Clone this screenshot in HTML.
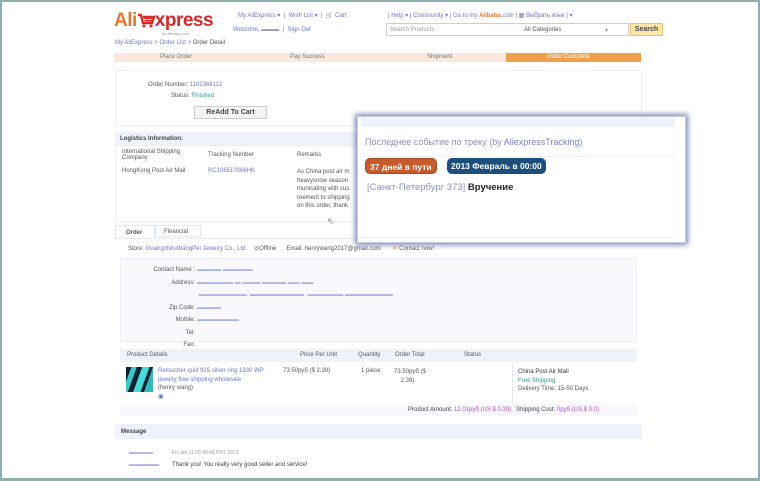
<!DOCTYPE html>
<html><head><meta charset="utf-8"><style>
*{margin:0;padding:0;box-sizing:border-box}
body{width:760px;height:481px;overflow:hidden;background:#fff;font-family:"Liberation Sans",sans-serif;font-size:6px;color:#555;position:relative}
.frame{position:absolute;left:0;top:0;width:760px;height:481px;border:2px solid #8fb0b0;border-bottom-width:3px;pointer-events:none;z-index:20}
.a{position:absolute;white-space:nowrap}
.lk{color:#6b78c8}
.bx{position:absolute;border:1px solid #eceef5}
.hd{position:absolute;background:#eef3fb}
</style></head><body>
<div class="frame"></div>
<div class="a" style="left:114px;top:11px;font-size:19px;font-weight:bold;color:#e8762c;letter-spacing:-0.5px;line-height:20px">Ali<svg width="18" height="16" viewBox="0 0 18 16" style="vertical-align:-2px"><path d="M1 3h3l2 8h9l2-6H6" fill="none" stroke="#d8282a" stroke-width="2.4"/><path d="M7 6h8M7.5 8.5h7" stroke="#d8282a" stroke-width="1.8"/><circle cx="7" cy="14" r="1.5" fill="#d8282a"/><circle cx="14" cy="14" r="1.5" fill="#d8282a"/></svg><span style="color:#d8282a">xpress</span></div>
<div class="a" style="left:162px;top:31px;font-size:4px;color:#999">by Alibaba.com</div>
<div class="a lk" style="left:238px;top:12px">My AliExpress ▾ &nbsp;|&nbsp; Wish List ▾ &nbsp;|&nbsp; <span style="color:#d63">🛒</span> Cart</div>
<div class="a lk" style="left:233px;top:27px">Welcome, <span style="color:#99a">▬▬▬</span> &nbsp;|&nbsp; Sign Out</div>
<div class="a lk" style="left:388px;top:12px">| Help ▾ | Community ▾ | Go to my <b style="color:#e8762c">Alibaba</b>.com | ▦ Выбрать язык | ▾</div>
<div class="a" style="left:386px;top:23px;width:243px;height:13px;border:1px solid #ccd;font-size:6px;color:#99a;padding:3px 3px">Search Products<span style="position:absolute;left:137px;color:#555">All Categories</span><span style="position:absolute;left:218px">▾</span></div>
<div class="a" style="left:630px;top:23px;width:33px;height:13px;background:#fbe6a8;border:1px solid #e6c46a;font-weight:bold;color:#444;font-size:7px;text-align:center;line-height:11px">Search</div>
<div class="a lk" style="left:115px;top:40px">My AliExpress &gt; Order List &gt; <span style="color:#555">Order Detail</span></div>
<div class="a" style="left:114px;top:53px;width:392px;height:9px;background:#fbe7dc"></div>
<div class="a" style="left:506px;top:53px;width:135px;height:9px;background:#f0a04a"></div>
<div class="a" style="left:160px;top:54px;color:#777">Place Order</div>
<div class="a" style="left:290px;top:54px;color:#777">Pay Success</div>
<div class="a" style="left:427px;top:54px;color:#777">Shipment</div>
<div class="a" style="left:547px;top:54px;color:#fff">Order Complete</div>
<div class="bx" style="left:115px;top:70px;width:527px;height:56px"></div>
<div class="a" style="left:148px;top:82px">Order Number: <span class="lk">1102368112</span></div>
<div class="a" style="left:171px;top:93px">Status: <b style="color:#2a9a9a;font-weight:normal">Finished</b></div>
<div class="a" style="left:194px;top:106px;width:73px;height:13px;border:1px solid #ccc;background:#f4f4f6;font-weight:bold;font-size:7px;color:#444;text-align:center;line-height:11px">ReAdd To Cart</div>
<div class="hd" style="left:115px;top:132px;width:527px;height:13px"></div>
<div class="a" style="left:120px;top:136px;font-weight:bold;color:#444">Logistics Information:</div>
<div class="bx" style="left:115px;top:145px;width:527px;height:77px"></div>
<div class="a" style="left:122px;top:149px;line-height:6px">International Shipping<br>Company</div>
<div class="a" style="left:208px;top:152px">Tracking Number</div>
<div class="a" style="left:297px;top:152px">Remarks</div>
<div class="a" style="left:122px;top:168px">HongKong Post Air Mail</div>
<div class="a lk" style="left:208px;top:168px">RC106510066HK</div>
<div class="a" style="left:297px;top:168px;line-height:8.5px">As China post air m<br>heavysnow season<br>municating with cus<br>reement to shipping<br>on this order, thank</div>
<div class="a" style="left:327px;top:216px;font-size:9px;color:#889">⇖</div>
<div class="a" style="left:115px;top:225px;width:40px;height:13px;border:1px solid #e6e8ef;border-bottom:none;font-weight:bold;padding:4px 10px">Order</div>
<div class="a" style="left:155px;top:225px;width:46px;height:12px;border:1px solid #e6e8ef;background:#fafbfd;padding:3px 8px">Financial</div>
<div class="a" style="left:115px;top:238px;width:527px;height:1px;background:#e6e8ef"></div>
<div class="a" style="left:128px;top:245px">Store: <span class="lk">GuangzhouWangPei Jewelry Co., Ltd.</span> &nbsp;&nbsp;&nbsp;◎Offline &nbsp;&nbsp;&nbsp;&nbsp; Email: henrywang2017@gmail.com &nbsp;&nbsp;&nbsp;&nbsp;&nbsp; <span style="color:#e8a040">✉</span> Contact now!</div>
<div class="a" style="left:120px;top:258px;width:517px;height:84px;background:#f9f9fd;border:1px solid #eef"></div>
<div class="a" style="left:145px;top:264px;line-height:12.5px;text-align:right;width:50px">Contact Name :<br>Address:<br><br>Zip Code:<br>Mobile:<br>Tel:<br>Fax:</div>
<div class="a" style="left:197px;top:264px;line-height:12.5px;color:#aab3e6">▬▬▬▬ ▬▬▬▬▬<br>▬▬▬▬▬▬ ▬ ▬▬▬ ▬▬▬▬ ▬▬ ▬▬<br>&nbsp;▬▬▬▬▬▬▬▬, ▬▬▬▬▬▬▬▬▬, ▬▬▬▬▬▬ ▬▬▬▬▬▬▬▬<br>▬▬▬▬<br>▬▬▬▬▬▬▬</div>
<div class="hd" style="left:120px;top:349px;width:517px;height:13px"></div>
<div class="a" style="left:127px;top:352px">Product Details</div>
<div class="a" style="left:300px;top:352px">Price Per Unit</div>
<div class="a" style="left:358px;top:352px">Quantity</div>
<div class="a" style="left:395px;top:352px">Order Total</div>
<div class="a" style="left:464px;top:352px">Status</div>
<div class="a" style="left:126px;top:367px;width:27px;height:25px;background:linear-gradient(110deg,#123 0 15%,#3cc 15% 30%,#123 30% 45%,#4dd 45% 65%,#123 65% 75%,#3bb 75%)"></div>
<div class="a lk" style="left:158px;top:367px;line-height:8.5px">Retoucher quiif 925 silver ring 1930 WP<br>jewelry free shipping wholesale<br><span style="color:#555">(henry wang)</span><br>▣</div>
<div class="a" style="left:283px;top:368px">73.50руб ($ 2.39)</div>
<div class="a" style="left:361px;top:368px">1 piece</div>
<div class="a" style="left:394px;top:368px;line-height:8.5px">73.50руб ($<br>&nbsp;&nbsp;&nbsp;&nbsp;2.39)</div>
<div class="a" style="left:512px;top:363px;width:1px;height:40px;background:#e6e8ef"></div>
<div class="a" style="left:518px;top:368px;line-height:8.5px"><span style="color:#333">China Post Air Mail</span><br><span style="color:#2a9a9a">Free Shipping</span><br>Delivery Time: 15-50 Days</div>
<div class="a" style="left:120px;top:404px;width:517px;height:12px;background:#f9f9fd"></div>
<div class="a" style="left:408px;top:407px;color:#444">Product Amount: <span style="color:#b050c0">12.01руб (US $ 0.39)</span> &nbsp; Shipping Cost: <span style="color:#b050c0">0руб (US $ 0.0)</span></div>
<div class="hd" style="left:115px;top:424px;width:527px;height:15px"></div>
<div class="a" style="left:121px;top:429px;font-weight:bold;color:#444">Message</div>
<div class="a" style="left:129px;top:450px;color:#aab3e6">▬▬▬▬</div>
<div class="a" style="left:129px;top:462px;color:#aab3e6">▬▬▬▬▬</div>
<div class="a" style="left:172px;top:450px;font-size:5px;color:#99a">Fri Jan 11 05:49:43 PST 2013</div>
<div class="a" style="left:172px;top:462px;color:#444">Thank you! You really very good seller and service!</div>
<!-- popup -->
<div class="a" style="left:357px;top:116px;width:329px;height:127px;background:#fff;border:1px solid #c8cce0;box-shadow:0 0 5px 2px #8088b8;z-index:10">
 <div style="position:absolute;left:3px;top:0;right:10px;height:10px;background:#eef3fb"></div>
 <div style="position:absolute;left:10px;right:10px;top:39px;height:1px;background:#eef0f4"></div>
 <div style="position:absolute;left:7px;top:20px;font-size:9px;color:#8a8fb8">Последнее событие по треку (by <span style="color:#7a80d8">AliexpressTracking</span>)</div>
 <div style="position:absolute;left:7px;top:41px;height:16px;padding:0 4px;background:#c85a2c;color:#fff;font-size:8.5px;font-weight:bold;line-height:16px;border-radius:5px;border:1px solid #a0481f">37 дней в пути</div>
 <div style="position:absolute;left:89px;top:41px;height:16px;padding:0 4px;background:#1c4f7c;color:#fff;font-size:8.5px;font-weight:bold;line-height:16px;border-radius:5px">2013 Февраль в 00:00</div>
 <div style="position:absolute;left:9px;top:65px;font-size:9.5px;color:#8a8fc8">[Санкт-Петербург 373] <b style="color:#223">Вручение</b></div>
 <div style="position:absolute;left:3px;right:10px;bottom:4px;height:1px;background:#eef0f4"></div>
</div>
</body></html>
